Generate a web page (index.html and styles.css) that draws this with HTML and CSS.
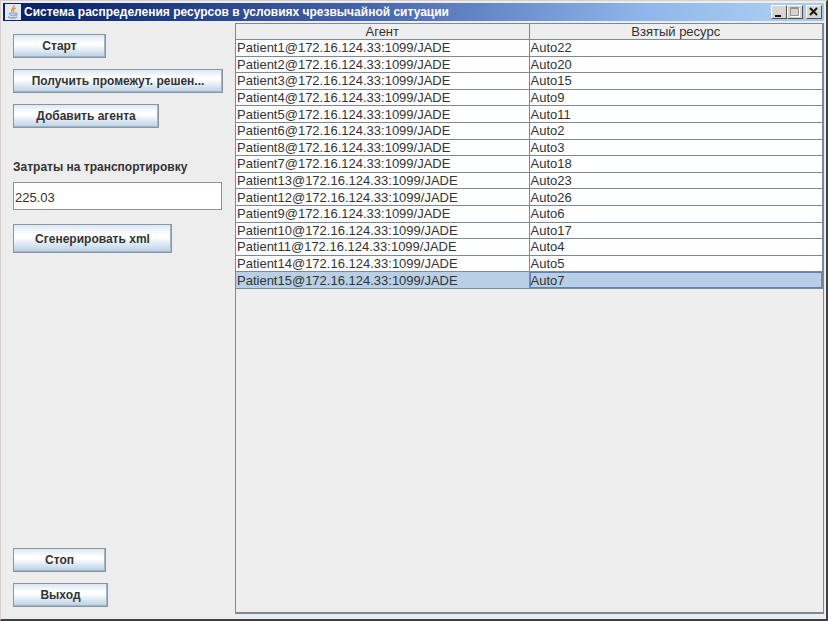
FILE: index.html
```html
<!DOCTYPE html>
<html lang="ru">
<head>
<meta charset="utf-8">
<title>Система распределения ресурсов</title>
<link rel="stylesheet" href="styles.css">
</head>
<body>
<div class="window">
  <header class="titlebar">
    <svg class="app-icon" viewBox="0 0 16 16" aria-hidden="true">
      <rect width="16" height="16" fill="#e4e8ee"/>
      <path d="M9 1C10 4 5 5 7 8M11 4C8 5 8 6 9 8" fill="none" stroke="#e09a48" stroke-width="1.5"/>
      <path d="M4 9h7v2q-3 2-6 0zM11 9q3 0 0 3" fill="#c3cedb" stroke="#8fa3ba"/>
      <path d="M3 13q5 2 9 0" fill="none" stroke="#8fa3ba" stroke-width="1.5"/>
    </svg>
    <h1 class="title">Система распределения ресурсов в условиях чрезвычайной ситуации</h1>
    <div class="controls">
      <button class="control" type="button" aria-label="Свернуть"><svg viewBox="0 0 14 12"><path d="M3 9h6v2H3z" fill="#111"/></svg></button>
      <button class="control" type="button" aria-label="Развернуть"><svg viewBox="0 0 14 12"><path d="M2.500 1.500h8v8h-8zM2.500 2.500h8" fill="none" stroke="#929292"/><path d="M3 10.500h8.500V2" fill="none" stroke="#fff"/></svg></button>
      <button class="control close" type="button" aria-label="Закрыть"><svg viewBox="0 0 14 12"><path d="M3 2l7 7M10 2l-7 7" fill="none" stroke="#111" stroke-width="1.800"/></svg></button>
    </div>
  </header>
  <main class="content">
    <section class="sidebar">
      <button class="btn start" type="button">Старт</button>
      <button class="btn solution" type="button">Получить промежут. решен...</button>
      <button class="btn add" type="button">Добавить агента</button>
      <label class="label" for="cost">Затраты на транспортировку</label>
      <input class="field" id="cost" type="text" value="225.03">
      <button class="btn generate" type="button">Сгенерировать xml</button>
      <button class="btn stop" type="button">Стоп</button>
      <button class="btn exit" type="button">Выход</button>
    </section>
    <section class="scroll-pane">
      <table class="agents">
        <thead><tr><th>Агент</th><th>Взятый ресурс</th></tr></thead>
        <tbody>
          <tr><td>Patient1@172.16.124.33:1099/JADE</td><td>Auto22</td></tr>
          <tr><td>Patient2@172.16.124.33:1099/JADE</td><td>Auto20</td></tr>
          <tr><td>Patient3@172.16.124.33:1099/JADE</td><td>Auto15</td></tr>
          <tr><td>Patient4@172.16.124.33:1099/JADE</td><td>Auto9</td></tr>
          <tr><td>Patient5@172.16.124.33:1099/JADE</td><td>Auto11</td></tr>
          <tr><td>Patient6@172.16.124.33:1099/JADE</td><td>Auto2</td></tr>
          <tr><td>Patient8@172.16.124.33:1099/JADE</td><td>Auto3</td></tr>
          <tr><td>Patient7@172.16.124.33:1099/JADE</td><td>Auto18</td></tr>
          <tr><td>Patient13@172.16.124.33:1099/JADE</td><td>Auto23</td></tr>
          <tr><td>Patient12@172.16.124.33:1099/JADE</td><td>Auto26</td></tr>
          <tr><td>Patient9@172.16.124.33:1099/JADE</td><td>Auto6</td></tr>
          <tr><td>Patient10@172.16.124.33:1099/JADE</td><td>Auto17</td></tr>
          <tr><td>Patient11@172.16.124.33:1099/JADE</td><td>Auto4</td></tr>
          <tr><td>Patient14@172.16.124.33:1099/JADE</td><td>Auto5</td></tr>
          <tr class="selected"><td>Patient15@172.16.124.33:1099/JADE</td><td class="focused">Auto7</td></tr>
        </tbody>
      </table>
    </section>
  </main>
</div>
</body>
</html>
```
FILE: styles.css
```css
* { box-sizing: border-box; }

body {
  margin: 0;
  font-family: "Liberation Sans", Arial, sans-serif;
  color: #333;
}

.window {
  display: flex;
  flex-direction: column;
  min-height: 100vh;
  padding: 2px 2px 5px 2px;
  background: #ededed;
  border: 1px solid #d6cfcb;
  border-right: 2px solid #404040;
  border-bottom: 2px solid #404040;
}

.titlebar {
  display: flex;
  align-items: center;
  height: 18px;
  padding: 0 2px;
  gap: 3px;
  background: linear-gradient(to right, #0a246a 5%, #4866ad 45%, #8fb6ea 78%, #a6caf0 93%);
}

.app-icon { width: 16px; height: 16px; }

.title {
  flex: 1;
  margin: 0;
  font: bold 12px/18px "Liberation Sans", Arial, sans-serif;
  color: #fff;
  white-space: nowrap;
}

.controls { display: flex; }

.control {
  width: 16px;
  height: 14px;
  padding: 0;
  background: #d8d6d2;
  border: 1px solid;
  border-color: #fff #505050 #505050 #fff;
}

.control svg { display: block; width: 14px; height: 12px; }
.close { margin-left: 3px; }

.content { display: flex; flex: 1; padding-top: 2px; }

.sidebar {
  display: flex;
  flex-direction: column;
  align-items: flex-start;
  flex: 0 0 232px;
  min-width: 0;
  padding: 11px 12px 7px 10px;
}

.btn {
  height: 24px;
  padding: 0;
  font: bold 12px/20px "Liberation Sans", Arial, sans-serif;
  color: #333;
  background: linear-gradient(#dde8f3, #fff 35%, #fff 45%, #b8cfe5);
  border: 1px solid #8496a8;
  box-shadow: inset -1px -1px #a3b4c4;
}

.start { width: 93px; }
.solution { width: 210px; margin-top: 11px; }
.add { width: 146px; margin-top: 11px; }
.generate { width: 159px; height: 29px; margin-top: 14px; }
.stop { width: 93px; margin-top: auto; }
.exit { width: 95px; margin-top: 11px; }

.label { margin: 31px 0 7px; font: bold 12px/16px "Liberation Sans", Arial, sans-serif; }

.field {
  width: 209px;
  height: 28px;
  padding: 4px 1px 2px;
  font: 13px "Liberation Sans", Arial, sans-serif;
  color: #333;
  background: #fff;
  border: 1px solid #8a949e;
}

.scroll-pane { flex: 1; border: 1px solid #7a8a99; border-bottom-width: 2px; }

.agents {
  width: 100%;
  height: 265px;
  table-layout: fixed;
  border-collapse: separate;
  border-spacing: 0;
  font-size: 13px;
  line-height: 15px;
}

.agents th, .agents td {
  padding: 0 1px;
  border-right: 1px solid #7a8a99;
  border-bottom: 1px solid #7a8a99;
}

.agents th { font-weight: normal; background: #eee; }
.agents td { background: #fff; }
.agents .selected td { background: #b8cfe5; }
.agents .focused { box-shadow: inset 0 0 0 1px #6382bf; }
```
